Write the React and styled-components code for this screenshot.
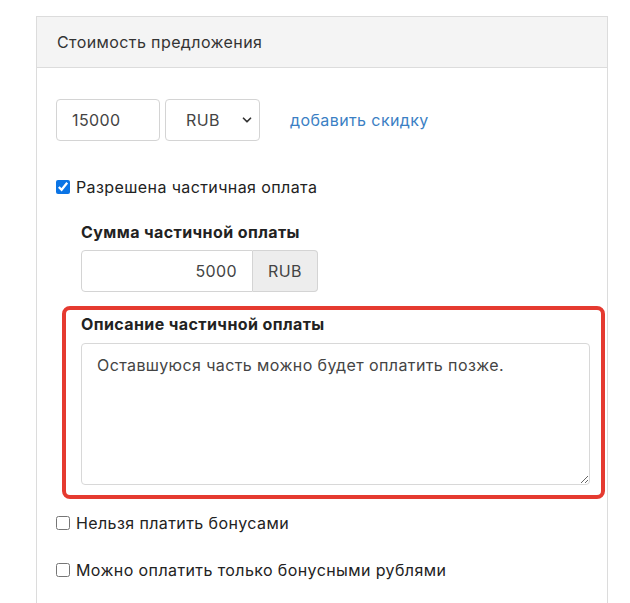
import React from "react";
import styled, { createGlobalStyle } from "styled-components";
import { ChevronDown } from "lucide-react";

const GlobalStyle = createGlobalStyle`
  body {
    margin: 0;
    background: #fff;
    font-family: 'Inter', 'Noto Sans', sans-serif;
    font-size: 16px;
    letter-spacing: 0.4px;
    color: #222;
  }
`;

const Page = styled.div`
  padding: 16px 0 0 36px;
`;

const Card = styled.section`
  width: 570px;
  border: 1px solid #dcdcdc;
  border-bottom: none;
  min-height: 600px;
`;

const CardHeader = styled.header`
  height: 50px;
  padding: 0 20px;
  display: flex;
  align-items: center;
  background: #f4f4f4;
  border-bottom: 1px solid #dcdcdc;
  color: #333;
`;

const CardBody = styled.div`
  padding: 31px 19px 0;
  display: flex;
  flex-direction: column;
`;

const PriceRow = styled.div`
  display: flex;
  align-items: center;
`;

const Field = styled.input`
  box-sizing: border-box;
  flex: none;
  height: 42px;
  width: ${(p) => p.$width || "100%"};
  padding: 0 15px;
  border: 1px solid #d4d4d4;
  border-radius: ${(p) => p.$radius || "4px"};
  font: inherit;
  letter-spacing: inherit;
  color: #444;
  text-align: ${(p) => p.$align || "left"};
  outline: none;
`;

const SelectWrap = styled.div`
  position: relative;
  margin-left: 5px;
`;

const Select = styled.select`
  box-sizing: border-box;
  appearance: none;
  height: 42px;
  width: 95px;
  padding: 0 20px;
  border: 1px solid #d4d4d4;
  border-radius: 4px;
  background: #fff;
  font: inherit;
  letter-spacing: inherit;
  color: #444;
`;

const Chevron = styled(ChevronDown)`
  position: absolute;
  right: 6px;
  top: 14px;
  pointer-events: none;
  color: #333;
`;

const Link = styled.a`
  margin-left: 30px;
  color: #3b7fc4;
  text-decoration: none;
`;

const CheckRow = styled.label`
  display: flex;
  align-items: center;
  gap: 6px;
  line-height: 24px;
  margin-top: ${(p) => p.$top || "0"};
`;

const Check = styled.input.attrs({ type: "checkbox" })`
  margin: 0;
  width: 14px;
  height: 14px;
  accent-color: #0b74e5;
`;

const Partial = styled.div`
  padding-left: 25px;
  margin-top: 21px;
`;

const Label = styled.div`
  font-weight: 700;
  line-height: 24px;
  color: #222;
  margin-bottom: ${(p) => p.$gap || "8px"};
`;

const InputGroup = styled.div`
  display: flex;
`;

const Addon = styled.span`
  box-sizing: border-box;
  flex: none;
  width: 65px;
  height: 42px;
  display: flex;
  align-items: center;
  justify-content: center;
  background: #ededed;
  border: 1px solid #d4d4d4;
  border-left: none;
  border-radius: 0 4px 4px 0;
  color: #444;
`;

const Highlight = styled.div`
  margin: 14px -17px 0 6px;
  padding: 2px 11px 10px 15px;
  border: 4px solid #e53a30;
  border-radius: 8px;
`;

const TextArea = styled.textarea`
  box-sizing: border-box;
  display: block;
  width: 100%;
  height: 142px;
  padding: 9px 15px;
  border: 1px solid #d8d8d8;
  border-radius: 4px;
  font: inherit;
  letter-spacing: inherit;
  line-height: 24px;
  color: #444;
  outline: none;
`;

export default function App() {
  return (
    <>
      <GlobalStyle />
      <Page>
        <Card>
          <CardHeader>Стоимость предложения</CardHeader>
          <CardBody>
            <PriceRow>
              <Field $width="104px" defaultValue="15000" />
              <SelectWrap>
                <Select defaultValue="RUB">
                  <option>RUB</option>
                  <option>USD</option>
                  <option>EUR</option>
                </Select>
                <Chevron size={14} strokeWidth={3} />
              </SelectWrap>
              <Link href="#">добавить скидку</Link>
            </PriceRow>

            <CheckRow $top="34px">
              <Check defaultChecked />
              Разрешена частичная оплата
            </CheckRow>

            <Partial>
              <Label $gap="6px">Сумма частичной оплаты</Label>
              <InputGroup>
                <Field
                  $width="172px"
                  $radius="4px 0 0 4px"
                  $align="right"
                  defaultValue="5000"
                />
                <Addon>RUB</Addon>
              </InputGroup>
            </Partial>

            <Highlight>
              <Label $gap="7px">Описание частичной оплаты</Label>
              <TextArea defaultValue="Оставшуюся часть можно будет оплатить позже." />
            </Highlight>

            <CheckRow $top="12px">
              <Check />
              Нельзя платить бонусами
            </CheckRow>
            <CheckRow $top="23px">
              <Check />
              Можно оплатить только бонусными рублями
            </CheckRow>
          </CardBody>
        </Card>
      </Page>
    </>
  );
}
